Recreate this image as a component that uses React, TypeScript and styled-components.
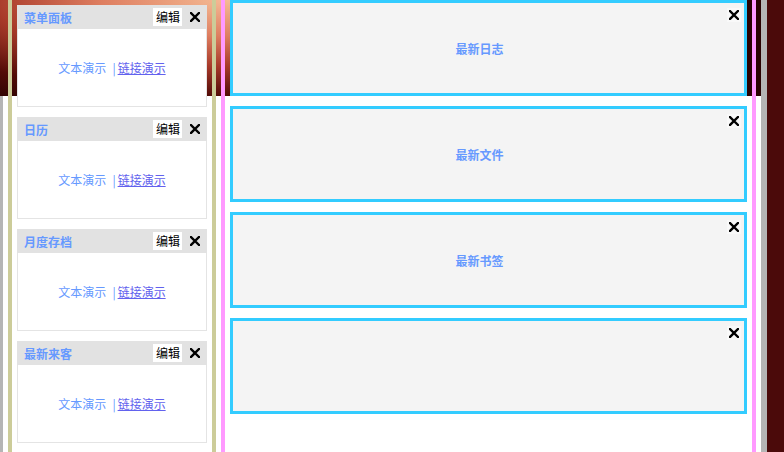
import React from "react";
import styled, { createGlobalStyle } from "styled-components";

const GlobalStyle = createGlobalStyle`
  *, *::before, *::after {
    box-sizing: border-box;
  }
  html, body {
    margin: 0;
    padding: 0;
    background: #ffffff;
  }
  body {
    font-family: "Noto Sans CJK SC", "Noto Sans", sans-serif;
    font-size: 12px;
  }
`;

const Page = styled.div`
  display: flex;
  width: 784px;
  height: 452px;
  overflow: hidden;
  background-color: #ffffff;
  background-image: radial-gradient(
    ellipse 430px 120px at 230px 0px,
    #f5bc96 0%,
    #de7e60 30%,
    #a83a2a 55%,
    #520b07 80%,
    #2a0202 100%
  );
  background-repeat: no-repeat;
  background-size: 767px 96px;
`;

const EdgeStrip = styled.div<{ $top?: number; $w: number }>`
  width: ${(p) => p.$w}px;
  margin-top: ${(p) => p.$top || 0}px;
  background: #b5b5b5;
  flex-shrink: 0;
`;

const Gap = styled.div`
  width: 5px;
  flex-shrink: 0;
`;

const DarkEdge = styled.div`
  flex: 1;
  background: #4b0a0a;
`;

const Sidebar = styled.div`
  width: 208px;
  flex-shrink: 0;
  border-left: 4px solid #cccc99;
  border-right: 4px solid #cccc99;
  padding: 5px 5px 0;
  display: flex;
  flex-direction: column;
  gap: 10px;
`;

const Card = styled.div`
  height: 102px;
  flex-shrink: 0;
  background: #ffffff;
  border: 1px solid #e4e4e4;
  border-top: none;
  display: flex;
  flex-direction: column;
`;

const CardHead = styled.div`
  height: 24px;
  background: #e2e2e2;
  margin: 0 -1px;
  display: flex;
  align-items: center;
  padding: 0 7px 0 7px;
`;

const CardTitle = styled.span`
  flex: 1;
  color: #6699ff;
  font-weight: bold;
  font-size: 12px;
`;

const EditButton = styled.span`
  background: #ffffff;
  color: #000000;
  font-size: 12px;
  line-height: 18px;
  padding: 0 2px 0 3px;
  margin-right: 8px;
`;

const CloseIcon = styled.svg`
  width: 10px;
  height: 10px;
  display: block;
`;

const CardBody = styled.div`
  flex: 1;
  display: flex;
  align-items: center;
  justify-content: center;
  color: #6699ff;
  font-size: 12px;
  padding-bottom: 1px;
`;

const Sep = styled.span`
  margin: 0 2px 0 6px;
`;

const DemoLink = styled.a`
  color: #6262ee;
  text-decoration: underline;
  cursor: pointer;
`;

const Main = styled.div`
  width: 535px;
  flex-shrink: 0;
  border-left: 4px solid #ff99ff;
  border-right: 4px solid #ff99ff;
  padding: 0 5px;
  display: flex;
  flex-direction: column;
  gap: 10px;
`;

const Panel = styled.div`
  position: relative;
  height: 96px;
  flex-shrink: 0;
  background: #f4f4f4;
  border: 3px solid #33ccff;
  display: flex;
  align-items: center;
  justify-content: center;
  padding-right: 18px;
`;

const PanelTitle = styled.span`
  color: #6699ff;
  font-weight: bold;
  font-size: 12px;
`;

const PanelClose = styled.span`
  position: absolute;
  top: 5px;
  right: 3px;
  width: 14px;
  height: 14px;
  display: flex;
  align-items: center;
  justify-content: center;
  background: #f9f9f9;
`;

const Close = () => (
  <CloseIcon viewBox="0 0 10 10">
    <path d="M1 1 L9 9 M9 1 L1 9" stroke="#000" strokeWidth="2.4" strokeLinecap="square" />
  </CloseIcon>
);

const cards = ["菜单面板", "日历", "月度存档", "最新来客"];
const panels = ["最新日志", "最新文件", "最新书签", ""];

export default function App() {
  return (
    <>
      <GlobalStyle />
      <Page>
        <EdgeStrip $w={3} $top={96} />
        <Gap />
        <Sidebar>
          {cards.map((t) => (
            <Card key={t}>
              <CardHead>
                <CardTitle>{t}</CardTitle>
                <EditButton>编辑</EditButton>
                <Close />
              </CardHead>
              <CardBody>
                文本演示<Sep>|</Sep>
                <DemoLink>链接演示</DemoLink>
              </CardBody>
            </Card>
          ))}
        </Sidebar>
        <Gap />
        <Main>
          {panels.map((t, i) => (
            <Panel key={i}>
              <PanelTitle>{t}</PanelTitle>
              <PanelClose>
                <Close />
              </PanelClose>
            </Panel>
          ))}
        </Main>
        <Gap />
        <EdgeStrip $w={6} />
        <DarkEdge />
      </Page>
    </>
  );
}
